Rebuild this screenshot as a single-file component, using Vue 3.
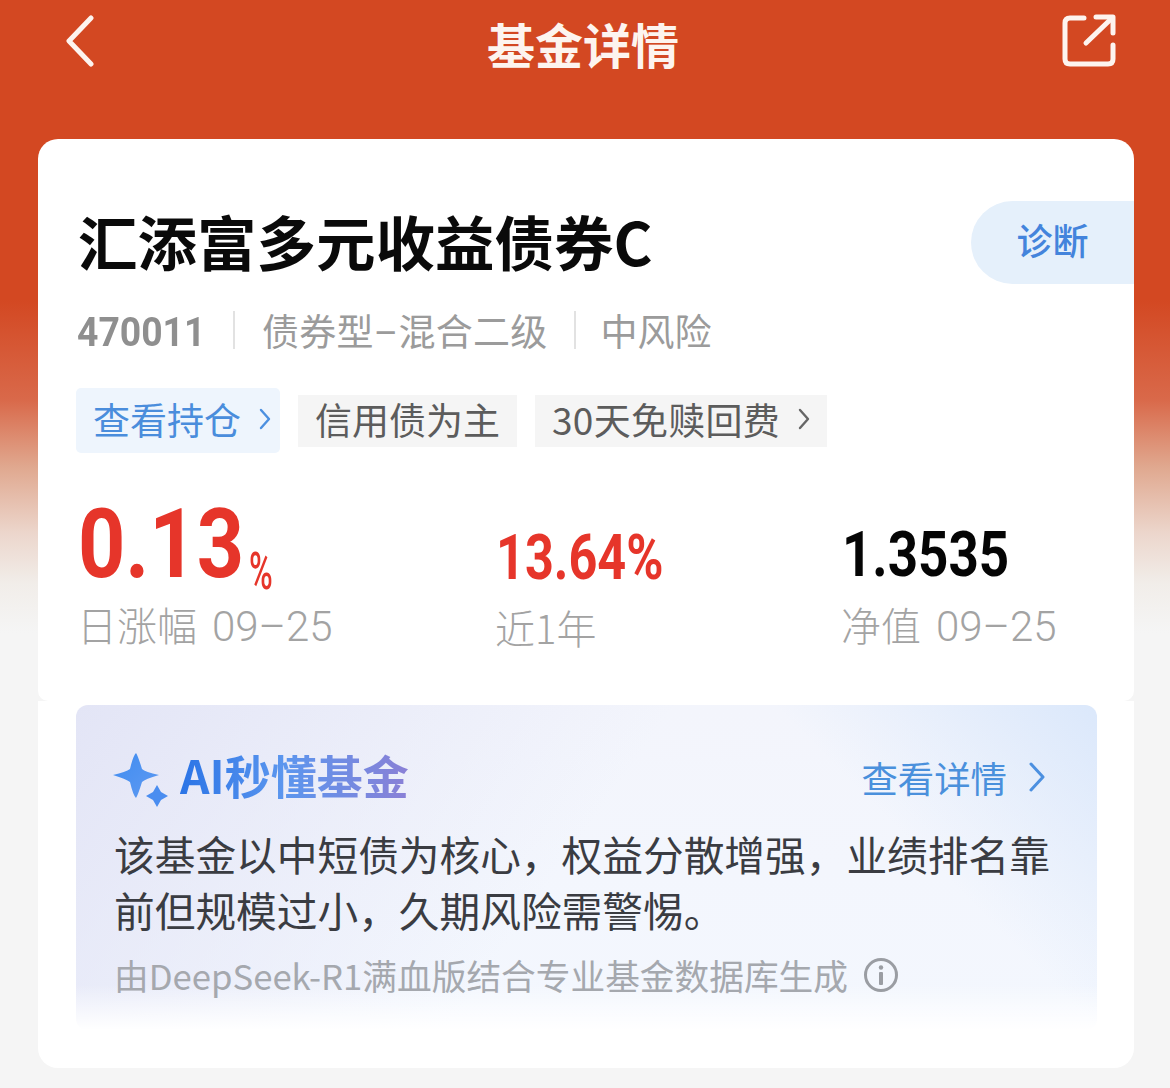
<script setup>
const stats = [
  { value: '13.64%', label: '近1年', date: '', red: true, cls: 'mid' },
  { value: '1.3535', label: '净值', date: '09–25', red: false, cls: 'last' },
]
</script>

<template>
  <div class="page">
    <header class="nav">
      <svg class="back" viewBox="0 0 32 52" width="32" height="52" fill="none">
        <path d="M27 3 L5 26 L27 49" stroke="#fdf4ef" stroke-width="5" stroke-linecap="round" stroke-linejoin="round" />
      </svg>
      <h1 class="nav-title">基金详情</h1>
      <svg class="share" viewBox="0 0 54 54" width="54" height="54" fill="none" stroke="#fdf4ef" stroke-width="5" stroke-linecap="round" stroke-linejoin="round">
        <path d="M22 5 H8 Q3 5 3 10 V46 Q3 51 8 51 H46 Q51 51 51 46 V32" />
        <path d="M24 30 L49 6" />
        <path d="M34 4 H51 V20" />
      </svg>
    </header>

    <main class="card">
      <section class="top">
        <div class="pill">诊断</div>
        <h2 class="title">汇添富多元收益债券C</h2>
        <div class="meta">
          <span class="code"><span class="code-in">470011</span></span>
          <i class="sep"></i>
          <span class="kind">债券型<span class="dash">–</span>混合二级</span>
          <i class="sep second"></i>
          <span>中风险</span>
        </div>
        <div class="tags">
          <div class="tag blue">
            查看持仓
            <svg viewBox="0 0 12 22" width="12" height="22" fill="none"><path d="M2 2 L10 11 L2 20" stroke="#4c90e0" stroke-width="2.4" stroke-linecap="round" stroke-linejoin="round" /></svg>
          </div>
          <div class="tag">信用债为主</div>
          <div class="tag">
            <span class="wide">30天免赎回费</span>
            <svg viewBox="0 0 12 22" width="12" height="22" fill="none"><path d="M2 2 L10 11 L2 20" stroke="#666" stroke-width="2.4" stroke-linecap="round" stroke-linejoin="round" /></svg>
          </div>
        </div>
        <div class="stats">
          <div class="stat first">
            <div class="big"><span class="big-num">0.13</span><span class="big-unit">%</span></div>
            <div class="label">日涨幅<span class="date">09–25</span></div>
          </div>
          <div v-for="s in stats" :key="s.label" class="stat" :class="s.cls">
            <div class="num" :class="{ red: s.red }">{{ s.value }}</div>
            <div class="label">{{ s.label }}<span v-if="s.date" class="date">{{ s.date }}</span></div>
          </div>
        </div>
      </section>

      <section class="bottom">
        <div class="ai">
          <div class="ai-head">
            <svg class="spark" viewBox="0 0 56 56" width="56" height="56">
              <defs>
                <linearGradient id="sp" x1="0" y1="0" x2="1" y2="1">
                  <stop offset="0" stop-color="#3f8cf0" />
                  <stop offset="1" stop-color="#5f9af2" />
                </linearGradient>
              </defs>
              <path d="M23 1 Q25 4 29 17 Q32 20 46 23 Q32 27 29 30 Q25 43 23 46 Q20 43 17 30 Q13 27 0 23 Q13 20 17 17 Q20 4 23 1 Z" fill="url(#sp)" />
              <path d="M44 33 L48 40 L55 44 L48 48 L44 55 L40 48 L33 44 L40 40 Z" fill="#4a8df0" />
            </svg>
            <span class="ai-title">AI秒懂基金</span>
            <span class="ai-more">查看详情</span>
            <svg class="ai-chev" viewBox="0 0 16 30" width="16" height="30" fill="none"><path d="M2 2 L14 15 L2 28" stroke="#4c90e0" stroke-width="3" stroke-linecap="round" stroke-linejoin="round" /></svg>
          </div>
          <p class="ai-body">该基金以中短债为核心，权益分散增强，业绩排名靠前但规模过小，久期风险需警惕。</p>
          <div class="ai-foot">
            <span>由DeepSeek-R1满血版结合专业基金数据库生成</span>
            <svg viewBox="0 0 36 36" width="36" height="36" fill="none">
              <circle cx="18" cy="18" r="15.5" stroke="#9a9da3" stroke-width="3" />
              <circle cx="18" cy="10.5" r="2.2" fill="#9a9da3" />
              <rect x="16" y="15" width="4" height="13" rx="1" fill="#9a9da3" />
            </svg>
          </div>
        </div>
      </section>
    </main>
  </div>
</template>

<style>
html, body { margin: 0; background: #f5f5f5; }
</style>

<style scoped>
.page {
  width: 1170px;
  height: 1088px;
  overflow: hidden;
  box-sizing: border-box;
  font-family: "Noto Sans CJK SC", "Liberation Sans", sans-serif;
  background: linear-gradient(180deg, #d34822 0, #d34822 300px, #d9694a 400px, #e0a88f 467px, #ecd6cc 533px, #f1ede9 583px, #f5f5f5 633px);
}
.nav {
  height: 139px;
  box-sizing: border-box;
  padding: 14px 54px 0 64px;
  display: flex;
  justify-content: space-between;
  align-items: flex-start;
}
.back { margin-top: 1px; }
.share { margin-top: -1px; }
.nav-title {
  margin: 0;
  font-size: 48px;
  line-height: 58px;
  font-weight: 700;
  color: #fdf4ef;
  transform: translateX(4px);
}
.card {
  margin: 0 36px 0 38px;
  display: flex;
  flex-direction: column;
}
.top {
  height: 562px;
  box-sizing: border-box;
  background: #fff;
  border-radius: 20px 20px 10px 10px;
  padding: 59px 0 0 40px;
  position: relative;
  overflow: hidden;
}
.pill {
  position: absolute;
  right: 0;
  top: 62px;
  width: 163px;
  height: 83px;
  border-radius: 42px 0 0 42px;
  background: #e5f0fb;
  color: #4384dc;
  font-size: 36px;
  line-height: 76px;
  text-align: center;
  font-weight: 500;
}
.title {
  margin: 0;
  font-size: 59.5px;
  line-height: 84px;
  font-weight: 700;
  color: #0a0a0a;
  white-space: nowrap;
}
.meta {
  margin-top: 23px;
  height: 50px;
  display: flex;
  align-items: center;
  font-size: 37px;
  color: #9b9b9b;
  font-weight: 400;
}
.code {
  width: 126px;
  margin-left: -1px;
  white-space: nowrap;
}
.code-in {
  display: inline-block;
  font-family: Roboto, "Liberation Sans", sans-serif;
  font-weight: 700;
  font-size: 41px;
  color: #8f8f8f;
  transform: scaleX(0.91);
  transform-origin: 0 50%;
}
.sep {
  width: 2px;
  height: 38px;
  background: #e2e2e2;
  margin: 0 27px 0 30px;
}
.sep.second { margin: 0 24px 0 27px; }
.kind {
  white-space: nowrap;
  letter-spacing: 0.2px;
}
.dash { display: inline-block; width: 25px; text-align: center; font-family: Roboto, sans-serif; }
.tags {
  margin-top: 33px;
  display: flex;
  align-items: center;
  gap: 18px;
  margin-left: -2px;
  height: 65px;
}
.tag {
  height: 52px;
  box-sizing: border-box;
  padding: 0 17px 4px;
  background: #f5f5f5;
  color: #5c5c5c;
  font-size: 37px;
  display: flex;
  align-items: center;
  gap: 18px;
  white-space: nowrap;
}
.tag.blue {
  height: 65px;
  padding: 0 9px 4px 17px;
  background: #eef5fd;
  color: #4a8ddc;
  border-radius: 5px;
}
.wide { letter-spacing: 0.3px; }
.stats {
  margin-top: 44px;
  display: flex;
  align-items: flex-end;
}
.stat { flex: none; }
.first { width: 418px; }
.mid { width: 346px; }
.big {
  height: 92px;
  color: #e6352a;
  display: flex;
  align-items: flex-end;
  line-height: 1;
  font-family: Roboto, "Liberation Sans", sans-serif;
  font-weight: 700;
}
.big-num {
  font-size: 96px;
  display: inline-block;
  width: 171px;
  transform: scaleX(0.86);
  transform-origin: 0 100%;
  margin-bottom: -3px;
  white-space: nowrap;
}
.big-unit {
  font-size: 52px;
  font-weight: 500;
  display: inline-block;
  transform: scaleX(0.62);
  transform-origin: 0 100%;
  margin-bottom: -9px;
}
.num {
  font-family: Roboto, "Liberation Sans", sans-serif;
  font-weight: 700;
  font-size: 63px;
  line-height: 1;
  color: #050505;
  display: inline-block;
  transform: scaleX(0.8);
  transform-origin: 0 100%;
  white-space: nowrap;
  margin-bottom: 3px;
}
.last .num { transform: scaleX(0.84); }
.num.red { color: #e6352a; }
.label {
  margin-top: 8px;
  margin-left: -1px;
  font-size: 40px;
  line-height: 54px;
  color: #a3a3a3;
  font-weight: 300;
  white-space: nowrap;
}
.date {
  font-family: Roboto, "Liberation Sans", sans-serif;
  font-weight: 300;
  font-size: 42px;
  margin-left: 15px;
}
.bottom {
  height: 367px;
  box-sizing: border-box;
  background: #fff;
  border-radius: 0 0 20px 20px;
  padding: 4px 37px 0 38px;
}
.ai {
  height: 325px;
  box-sizing: border-box;
  border-radius: 12px;
  padding: 41px 30px 0 38px;
  background:
    linear-gradient(180deg, rgba(255,255,255,0) 0, rgba(255,255,255,0) 86%, #fff 100%),
    linear-gradient(225deg, #dbe8fb 0, rgba(219,232,251,0) 24%),
    linear-gradient(125deg, #e3e5f6 0, rgba(227,229,246,0) 48%),
    linear-gradient(180deg, #f3f5fc 0, #f3f7fe 100%);
}
.ai-head {
  height: 56px;
  display: flex;
  align-items: center;
  padding-right: 22px;
}
.spark { margin: 11px 0 0 -1px; }
.ai-title {
  margin-left: 11px;
  font-size: 46px;
  line-height: 56px;
  font-weight: 700;
  white-space: nowrap;
  background: linear-gradient(90deg, #2b74e6 0, #5b96ee 45%, #8a80d6 100%);
  -webkit-background-clip: text;
  background-clip: text;
  color: transparent;
}
.ai-more {
  margin: 6px 22px 0 auto;
  font-size: 36.4px;
  color: #4a90dc;
  white-space: nowrap;
}
.ai-chev { margin-top: 5px; }
.ai-body {
  margin: 24px 0 0;
  font-size: 40.7px;
  line-height: 56px;
  color: #3a3c42;
  font-weight: 400;
}
.ai-foot {
  margin-top: 15px;
  display: flex;
  align-items: center;
  gap: 15px;
  font-size: 34.7px;
  line-height: 44px;
  color: #a5a8ae;
  white-space: nowrap;
}
</style>
